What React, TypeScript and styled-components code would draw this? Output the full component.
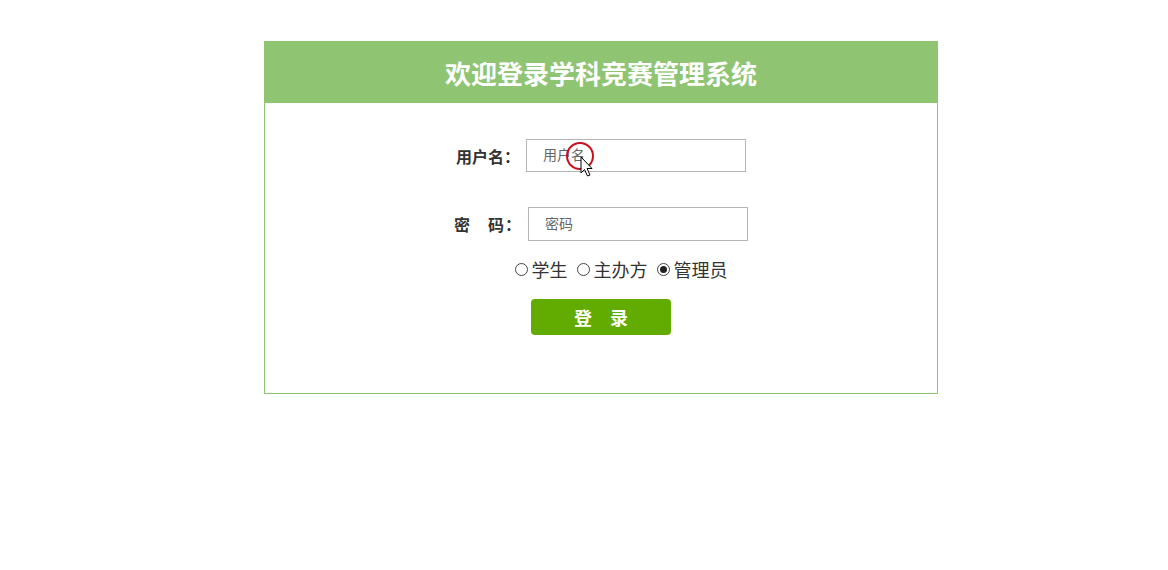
import { useState } from 'react';
import styled, { createGlobalStyle } from 'styled-components';

const GlobalStyle = createGlobalStyle`
  body {
    margin: 0;
    background: #fff;
    font-family: "Liberation Sans", "Noto Sans CJK SC", sans-serif;
    color: #333;
  }
`;

const roles = ['学生', '主办方', '管理员'];

export default function App() {
  const [role, setRole] = useState('管理员');

  return (
    <>
      <GlobalStyle />
      <Page>
        <Panel>
          <Header>欢迎登录学科竞赛管理系统</Header>
          <Form>
            <FieldRow>
              <Label>用户名：</Label>
              <InputWrap>
                <Input placeholder="用户名" />
                <Pointer width="34" height="42" viewBox="0 0 34 42">
                  <circle cx="15" cy="15" r="13" fill="none" stroke="#c8101e" strokeWidth="2" />
                  <path
                    d="M16 16 L16 32 L19.5 28.5 L22.5 35 L25 34 L22 27.5 L27 27.5 Z"
                    fill="#fff"
                    stroke="#000"
                    strokeWidth="1"
                    strokeLinejoin="round"
                  />
                </Pointer>
              </InputWrap>
            </FieldRow>
            <FieldRow $gap={35}>
              <Label $wide>密　码：</Label>
              <Input type="password" placeholder="密码" $tall />
            </FieldRow>
            <RoleRow>
              {roles.map((r) => (
                <RoleOption key={r} onClick={() => setRole(r)}>
                  <RadioDot $checked={role === r} />
                  {r}
                </RoleOption>
              ))}
            </RoleRow>
            <LoginButton>登　录</LoginButton>
          </Form>
        </Panel>
      </Page>
    </>
  );
}

const Page = styled.div`
  padding: 41px 0 0 264px;
`;

const Panel = styled.div`
  width: 674px;
  box-sizing: border-box;
  border: 1px solid #8ec472;
`;

const Header = styled.div`
  height: 61px;
  background: #8ec472;
  color: #fff;
  font-family: "Noto Sans CJK SC", sans-serif;
  font-weight: 700;
  font-size: 26px;
  display: flex;
  align-items: center;
  justify-content: center;
`;

const Form = styled.div`
  display: flex;
  flex-direction: column;
  align-items: center;
  padding: 36px 0 58px;
`;

const FieldRow = styled.div<{ $gap?: number }>`
  display: flex;
  align-items: center;
  margin-top: ${(p) => p.$gap ?? 0}px;
`;

const Label = styled.span<{ $wide?: boolean }>`
  font-family: "Noto Sans CJK SC", sans-serif;
  font-weight: 700;
  font-size: 16px;
  color: #333;
  margin-right: 6px;
  letter-spacing: ${(p) => (p.$wide ? '1px' : '0')};
`;

const InputWrap = styled.span`
  position: relative;
  display: inline-flex;
`;

const Input = styled.input<{ $tall?: boolean }>`
  width: 220px;
  height: ${(p) => (p.$tall ? 34 : 33)}px;
  box-sizing: border-box;
  border: 1px solid #b5b5b5;
  padding: 0 16px 3px;
  font-family: "Noto Sans CJK SC", sans-serif;
  font-size: 14px;
  color: #333;
  outline: none;

  &::placeholder {
    color: #666;
  }
`;

const Pointer = styled.svg`
  position: absolute;
  left: 39px;
  top: 2px;
  pointer-events: none;
`;

const RoleRow = styled.div`
  display: flex;
  align-items: center;
  gap: 9px;
  margin: 16px 0 0 40px;
  height: 24px;
`;

const RoleOption = styled.label`
  display: inline-flex;
  align-items: center;
  font-family: "Noto Sans CJK SC", sans-serif;
  font-size: 18px;
  color: #333;
  cursor: pointer;
`;

const RadioDot = styled.span<{ $checked: boolean }>`
  width: 13px;
  height: 13px;
  box-sizing: border-box;
  border: 1px solid #444;
  border-radius: 50%;
  margin-right: 4px;
  display: inline-flex;
  align-items: center;
  justify-content: center;

  &::after {
    content: '';
    width: 7px;
    height: 7px;
    border-radius: 50%;
    background: ${(p) => (p.$checked ? '#222' : 'transparent')};
  }
`;

const LoginButton = styled.button`
  margin-top: 18px;
  width: 140px;
  height: 36px;
  border: none;
  border-radius: 4px;
  background: #62ab00;
  color: #fff;
  font-family: "Noto Sans CJK SC", sans-serif;
  font-weight: 700;
  font-size: 18px;
  cursor: pointer;
`;
